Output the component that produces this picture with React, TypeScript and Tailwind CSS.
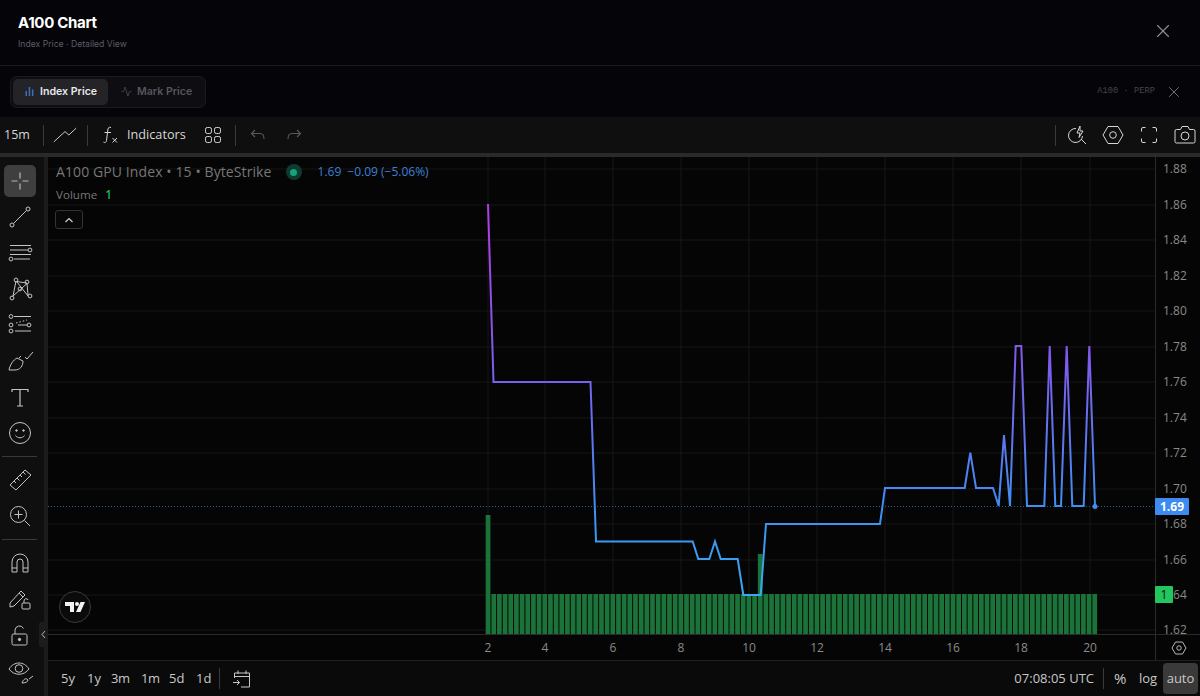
import { Activity, X } from "lucide-react";

const SANS = "font-['Open_Sans','Noto_Sans',sans-serif]";

const linePoints =
  "488,204 493.5,382 590.5,382 596,541.5 692.7,541.5 698.3,559 709.3,559 715,541.5 720.7,559 737.7,559 743.3,595 760.7,595 766,524 880,524 885,488 964.7,488 970.3,452.7 976,488 993,488 998.7,506 1004,435 1010,506 1015.7,346 1021.3,346 1027,506 1044.3,506 1049.7,346 1055.3,506 1061,506 1066.7,346 1072.3,506 1083.7,506 1089.3,346 1095,506";

const priceLabels = [
  ["1.88", 169], ["1.86", 205], ["1.84", 240], ["1.82", 276], ["1.80", 311], ["1.78", 347], ["1.76", 382],
  ["1.74", 418], ["1.72", 453], ["1.70", 489], ["1.68", 524], ["1.66", 560], ["1.64", 595], ["1.62", 630],
] as const;

const timeLabels = [
  ["2", 488], ["4", 545], ["6", 613], ["8", 681], ["10", 749], ["12", 817], ["14", 885], ["16", 953], ["18", 1021], ["20", 1090],
] as const;

const bars = Array.from({ length: 108 }, (_, i) => i);

function Icon({ size = 28, children, className = "" }: { size?: number; children: React.ReactNode; className?: string }) {
  return (
    <svg width={size} height={size} viewBox="0 0 28 28" fill="none" stroke="currentColor" strokeWidth="1" className={className}>
      {children}
    </svg>
  );
}

function Divider() {
  return <div className="w-px h-[21px] bg-[#3a3a3a]" />;
}

function Chart() {
  return (
    <svg className="absolute inset-0 block" width="1152" height="503" viewBox="48 157 1152 503">
      <defs>
        <linearGradient id="lineGrad" gradientUnits="userSpaceOnUse" x1="0" y1="204" x2="0" y2="595">
          <stop offset="0" stopColor="#b23ce6" />
          <stop offset="0.37" stopColor="#8457ee" />
          <stop offset="0.78" stopColor="#3f8ff3" />
          <stop offset="1" stopColor="#38a9f2" />
        </linearGradient>
      </defs>
      {priceLabels.map(([label, y]) => (
        <line key={label} x1="48" x2="1155" y1={y} y2={y} stroke="#171717" />
      ))}
      {timeLabels.map(([label, x]) => (
        <line key={label} x1={x} x2={x} y1="157" y2="634" stroke="#171717" />
      ))}
      {bars.map((i) => (
        <rect
          key={i}
          x={485.7 + i * 5.67}
          width="4.7"
          y={i === 0 ? 515 : i === 48 ? 554 : 594}
          height={i === 0 ? 119 : i === 48 ? 80 : 40}
          fill="#1b7339"
        />
      ))}
      <line x1="48" x2="1155" y1="506.5" y2="506.5" stroke="#2f6db5" strokeDasharray="1 2" opacity="0.8" />
      <polyline points={linePoints} fill="none" stroke="url(#lineGrad)" strokeWidth="2" strokeLinejoin="miter" />
      <circle cx="1095" cy="506.5" r="2.5" fill="#3f8ff3" />

      <line x1="48" x2="1200" y1="634.5" y2="634.5" stroke="#2a2a2a" />
      <line x1="1155.5" x2="1155.5" y1="157" y2="660" stroke="#2a2a2a" />
      {priceLabels.map(([label, y]) => (
        <text key={label} x="1163" y={y + 4} fill="#8a8a8a" fontSize="12" fontFamily="'Open Sans', sans-serif">
          {label}
        </text>
      ))}
      {timeLabels.map(([label, x]) => (
        <text key={label} x={x} y="652" textAnchor="middle" fill="#8a8a8a" fontSize="12" fontFamily="'Open Sans', sans-serif">
          {label}
        </text>
      ))}
      <rect x="1155" y="498" width="34" height="17" rx="1" fill="#3d8bf0" />
      <text x="1172" y="511" textAnchor="middle" fill="#ffffff" fontSize="12" fontWeight="700" fontFamily="'Open Sans', sans-serif">
        1.69
      </text>
      <rect x="1155" y="586" width="18" height="17" rx="1" fill="#22c55e" />
      <text x="1164" y="599" textAnchor="middle" fill="#111111" fontSize="12" fontFamily="'Open Sans', sans-serif">
        1
      </text>
      <g transform="translate(1179 648)" fill="none" stroke="#b8b8b8" strokeWidth="1">
        <path d="M-3.5 -6 L3.5 -6 L7 0 L3.5 6 L-3.5 6 L-7 0 Z" />
        <circle r="2.2" />
      </g>
      <g transform="translate(75 607)">
        <circle r="15.5" fill="#0b0b0b" stroke="#3a3a3a" />
        <path d="M-10 -5 H-1 V5 H-5 V-1 H-10 Z M5.5 -5 H10 L5.5 5 H1 Z" fill="#f2f2f2" />
        <circle cx="2" cy="-3" r="2" fill="#f2f2f2" />
      </g>
    </svg>
  );
}

export default function App() {
  return (
    <div className={`w-[1200px] h-[696px] flex flex-col overflow-hidden bg-[#050509] ${SANS}`}>
      {/* header */}
      <div className="h-[66px] shrink-0 flex items-start justify-between pl-[18px] pr-[26px] border-b border-[#1a1a20]">
        <div className="pt-[14px] font-['Inter',sans-serif]">
          <div className="text-[15px] leading-[18px] font-bold tracking-[-0.3px] text-white">A100 Chart</div>
          <div className="mt-[6px] text-[8.65px] leading-[12px] text-[#5c5c66]">Index Price · Detailed View</div>
        </div>
        <X size={22} strokeWidth={1.2} className="mt-[20px] text-[#8f8f96]" />
      </div>

      {/* tabs */}
      <div className="h-[51px] shrink-0 flex items-center justify-between pl-[10px] pr-[17px] font-['Inter',sans-serif]">
        <div className="flex items-center gap-[2px] h-[32px] px-[2px] rounded-[7px] bg-[#0d0d12] border border-[#1a1a20]">
          <div className="flex items-center gap-[5px] h-[26px] w-[95px] pl-[11px] rounded-[5px] bg-[#232328] text-[10.6px] font-semibold text-[#e8e8ea]">
            <svg width="11" height="11" viewBox="0 0 11 11" fill="#3f6fb5">
              <rect x="1.5" y="5" width="1.5" height="5" />
              <rect x="4.7" y="1" width="1.5" height="9" />
              <rect x="7.9" y="3.5" width="1.5" height="6.5" />
            </svg>
            Index Price
          </div>
          <div className="flex items-center gap-[5px] h-[26px] pl-[11px] pr-[11px] text-[10.6px] font-semibold text-[#56565e]">
            <Activity size={11} strokeWidth={1.5} />
            Mark Price
          </div>
        </div>
        <div className="flex items-center gap-[10px]">
          <span className="font-['Liberation_Mono',monospace] text-[8.6px] tracking-[0.1px] text-[#44444c]">A100 · PERP</span>
          <X size={18} strokeWidth={1.2} className="text-[#7d7d85]" />
        </div>
      </div>

      {/* top toolbar */}
      <div className="h-[36px] shrink-0 flex items-center bg-[#0f0f0f] text-[#d6d6d6]">
        <span className="ml-[4px] w-[39px] text-[12.5px] font-medium">15m</span>
        <Divider />
        <Icon size={24} className="ml-[9px] mr-[10px]">
          <path d="M1 22 L14 10 L18.5 14 L27 6" strokeWidth="1.1" />
        </Icon>
        <Divider />
        <svg width="20" height="20" viewBox="0 0 20 20" fill="none" stroke="currentColor" className="ml-[12px]">
          <path d="M11 2.5 C8.5 1.5 8 3.5 7.8 5 L6.5 15.5 C6.2 17.5 5 18 3.5 17.2 M4.5 7.5 H11" />
          <path d="M12.5 13 L17 17.5 M17 13 L12.5 17.5" />
        </svg>
        <span className="ml-[7px] text-[12.7px] font-medium">Indicators</span>
        <svg width="18" height="18" viewBox="0 0 18 18" fill="none" stroke="currentColor" className="ml-[18px] mr-[13px]">
          <rect x="1.5" y="1.5" width="6" height="6" rx="1.8" />
          <rect x="10.5" y="1.5" width="6" height="6" rx="1.8" />
          <rect x="1.5" y="10.5" width="6" height="6" rx="1.8" />
          <rect x="10.5" y="10.5" width="6" height="6" rx="1.8" />
        </svg>
        <Divider />
        <svg width="16" height="14" viewBox="0 0 16 14" fill="none" stroke="#5a5a5a" strokeWidth="1.1" className="ml-[14px]">
          <path d="M5 2 L1.5 5.5 L5 9 M1.5 5.5 H10 C12.5 5.5 14 7.5 14 11" />
        </svg>
        <svg width="16" height="14" viewBox="0 0 16 14" fill="none" stroke="#5a5a5a" strokeWidth="1.1" className="ml-[20px]">
          <path d="M11 2 L14.5 5.5 L11 9 M14.5 5.5 H6 C3.5 5.5 2 7.5 2 11" />
        </svg>
        <div className="ml-auto flex items-center">
          <Divider />
          <svg width="22" height="22" viewBox="0 0 22 22" fill="none" stroke="currentColor" className="ml-[11px]">
            <path d="M9 4.5 A7 7 0 1 0 15.5 12" />
            <path d="M13 2 L10 9 H13 L12 13.5 L16 7 H13 Z" />
            <path d="M14 15 L19 20" />
          </svg>
          <svg width="22" height="22" viewBox="0 0 22 22" fill="none" stroke="currentColor" className="ml-[13px]">
            <path d="M6 2.5 H16 L21 11 L16 19.5 H6 L1 11 Z" />
            <circle cx="11" cy="11" r="3.3" />
          </svg>
          <svg width="18" height="18" viewBox="0 0 18 18" fill="none" stroke="currentColor" className="ml-[16px]">
            <path d="M1.5 5.5 V3 A1.5 1.5 0 0 1 3 1.5 H5.5 M12.5 1.5 H15 A1.5 1.5 0 0 1 16.5 3 V5.5 M16.5 12.5 V15 A1.5 1.5 0 0 1 15 16.5 H12.5 M5.5 16.5 H3 A1.5 1.5 0 0 1 1.5 15 V12.5" />
          </svg>
          <svg width="22" height="20" viewBox="0 0 22 20" fill="none" stroke="currentColor" className="ml-[16px] mr-[4px]">
            <path d="M2.5 4.5 H6.5 L8 1.5 H14 L15.5 4.5 H19.5 A1.5 1.5 0 0 1 21 6 V16.5 A1.5 1.5 0 0 1 19.5 18 H2.5 A1.5 1.5 0 0 1 1 16.5 V6 A1.5 1.5 0 0 1 2.5 4.5 Z" />
            <circle cx="11" cy="11" r="4" />
          </svg>
        </div>
      </div>
      <div className="h-[4px] shrink-0 bg-[#2a2a2a]" />

      {/* body */}
      <div className="flex-1 flex min-h-0 bg-[#1c1c1c]">
        <LeftToolbar />
        <div className="ml-[4px] flex-1 flex flex-col min-w-0">
          <div className="relative h-[503px] shrink-0 bg-[#050505]">
            <Chart />
            <div className="absolute left-[8px] top-[6px] flex items-center text-[14px] tracking-[0.1px] leading-[18px] text-[#777777]">
              A100 GPU Index • 15 • ByteStrike
              <span className="ml-[14px] w-[16px] h-[16px] rounded-full bg-[#0e3a30] flex items-center justify-center">
                <span className="w-[7px] h-[7px] rounded-full bg-[#14a37f]" />
              </span>
              <span className="ml-[16px] flex gap-[6px] text-[12px] tracking-normal text-[#3f7fd6]">
                <span>1.69</span>
                <span>−0.09 (−5.06%)</span>
              </span>
            </div>
            <div className="absolute left-[8px] top-[29px] text-[11.6px] leading-[17px] text-[#777777]">
              Volume <span className="ml-[5px] font-semibold text-[#22b455]">1</span>
            </div>
            <div className="absolute left-[7px] top-[53px] w-[28px] h-[19px] rounded-[3px] border border-[#333333] bg-[#080808] flex items-center justify-center">
              <svg width="10" height="6" viewBox="0 0 10 6" fill="none" stroke="#d0d0d0" strokeWidth="1.2">
                <path d="M1.5 5 L5 1.5 L8.5 5" />
              </svg>
            </div>
          </div>
          <BottomBar />
        </div>
      </div>
    </div>
  );
}

function LeftToolbar() {
  return (
    <div className="relative w-[44px] shrink-0 bg-[#0f0f0f] flex flex-col pl-[4px] pt-[8px] text-[#c4c4c4]">
      <div className="w-[32px] h-[32px] rounded-[5px] bg-[#3f3f3f] flex items-center justify-center text-[#b8b8b8]">
        <svg width="22" height="22" viewBox="0 0 22 22" stroke="currentColor" strokeWidth="1.2">
          <path d="M11 2.5 V8.5 M11 13.5 V19.5 M2.5 11 H8.5 M13.5 11 H19.5" />
        </svg>
      </div>
      <div className="mt-[2px] flex flex-col">
        <ToolIcon>
          <path d="M7.5 20.5 L20.5 7.5" />
          <circle cx="6" cy="22" r="2" />
          <circle cx="22" cy="6" r="2" />
        </ToolIcon>
        <ToolIcon>
          <path d="M4 6.5 H25 M4 11 H22 M4 15.5 H25 M8 20 H24" />
          <circle cx="24" cy="11" r="1.9" />
          <circle cx="5" cy="20" r="1.9" />
        </ToolIcon>
        <ToolIcon>
          <path d="M7 21 L10 6 M11 7 L22 21 M6.5 21.5 L21 8.5 L22 20 M10 6.5 L21 8" />
          <circle cx="6" cy="23" r="1.9" />
          <circle cx="10" cy="5" r="1.9" />
          <circle cx="21" cy="7" r="1.9" />
          <circle cx="24" cy="21" r="1.9" />
          <circle cx="14" cy="14" r="1.9" />
        </ToolIcon>
        <ToolIcon>
          <path d="M8 5.5 H25 M12 14 H21 M9 20 H25" />
          <path d="M10 12 L21 9" strokeDasharray="1.5 2" />
          <circle cx="5" cy="5.5" r="1.9" />
          <circle cx="5" cy="14" r="1.9" />
          <circle cx="23" cy="14" r="1.9" />
          <circle cx="5" cy="20" r="1.9" />
        </ToolIcon>
        <ToolIcon>
          <path d="M3 23 C4 18 7 13 11 11 L17 14 C17 19 14 23 9 23 Z M13 11 L15 9 M19 10 L21 12 L27 5" />
        </ToolIcon>
        <ToolIcon>
          <path d="M6 9 V6.5 H22 V9 M14 6.5 V23 M11 23 H17" strokeWidth="1.2" />
        </ToolIcon>
        <ToolIcon>
          <circle cx="14" cy="14" r="10.5" />
          <circle cx="10.5" cy="11.5" r="0.8" fill="currentColor" />
          <circle cx="17.5" cy="11.5" r="0.8" fill="currentColor" />
          <path d="M9.5 16.5 C11.5 19.5 16.5 19.5 18.5 16.5" />
        </ToolIcon>
      </div>
      <div className="my-[5px] ml-[-2px] w-[35px] h-px bg-[#3a3a3a]" />
      <div className="flex flex-col">
        <ToolIcon>
          <path d="M4 19 L19 4 L25 9 L10 24 Z M8 15 L10 17 M11 12 L13.5 14.5 M14 9 L16 11 M17 6 L19.5 8.5" />
        </ToolIcon>
        <ToolIcon>
          <circle cx="12.5" cy="12.5" r="8" />
          <path d="M18.5 18.5 L24 24 M12.5 8.5 V16.5 M8.5 12.5 H16.5" />
        </ToolIcon>
      </div>
      <div className="my-[5px] ml-[-2px] w-[35px] h-px bg-[#3a3a3a]" />
      <div className="flex flex-col">
        <ToolIcon>
          <path d="M6 23 V13 A8 8 0 0 1 22 13 V23 H17 V13 A3 3 0 0 0 11 13 V23 Z M6 19 H11 M17 19 H22" />
        </ToolIcon>
        <ToolIcon>
          <path d="M4 18 L15 6 L19 10 L8 21 L4 22 Z M13 8 L17 12" />
          <rect x="16" y="18" width="8" height="6" rx="1" />
          <path d="M18 18 V16 A2.2 2.2 0 0 1 22.2 15" />
        </ToolIcon>
        <ToolIcon>
          <rect x="6" y="13" width="15" height="11" rx="1.5" />
          <path d="M9 13 V9 A4.5 4.5 0 0 1 17.5 7.5" />
          <circle cx="13.5" cy="18.5" r="1.2" fill="currentColor" />
        </ToolIcon>
        <ToolIcon>
          <path d="M3 12 C8 4 18 4 23 12 C18 19 8 19 3 12 Z" />
          <circle cx="13" cy="11.5" r="3.8" />
          <path d="M16 26 C17 23 19 21 21 22 L22 23 C22 25 19 26 16 26 Z M23 22 L27 19" />
        </ToolIcon>
      </div>
      <div className="absolute right-[-3px] top-[465px] w-[8px] h-[25px] rounded-[2px] bg-[#1c1c1c] flex items-center justify-center">
        <svg width="5" height="9" viewBox="0 0 5 9" fill="none" stroke="#b5b5b5">
          <path d="M4 1 L1 4.5 L4 8" />
        </svg>
      </div>
    </div>
  );
}

function ToolIcon({ children }: { children: React.ReactNode }) {
  return (
    <div className="w-[32px] h-[36px] shrink-0 flex items-center justify-center">
      <Icon>{children}</Icon>
    </div>
  );
}

function BottomBar() {
  return (
    <div className="flex-1 flex items-center border-t border-[#1f1f1f] bg-[#0a0a0a] text-[13px] text-[#c8c8c8] pl-[13px]">
      <span className="w-[26px]">5y</span>
      <span className="w-[24px]">1y</span>
      <span className="w-[30px] tracking-[-0.5px]">3m</span>
      <span className="w-[28px] tracking-[-0.5px]">1m</span>
      <span className="w-[27px]">5d</span>
      <span className="w-[23px]">1d</span>
      <Divider />
      <svg width="20" height="20" viewBox="0 0 20 20" fill="none" stroke="currentColor" className="ml-[12px]">
        <path d="M2.5 9 V4 H17.5 V18 H9 M2.5 7.5 H17.5 M6 1.5 V5 M14 1.5 V5 M1 13.5 H7.5 M5 11 L7.5 13.5 L5 16" />
      </svg>
      <span className="ml-auto text-[13px]">07:08:05 UTC</span>
      <div className="ml-[9px]"><Divider /></div>
      <span className="ml-[10px] w-[25px] text-[15px]">%</span>
      <span className="w-[24px]">log</span>
      <span className="w-[35px] h-[31px] mr-[2px] rounded-[4px] bg-[#3a3a3a] flex items-center justify-center">auto</span>
    </div>
  );
}
